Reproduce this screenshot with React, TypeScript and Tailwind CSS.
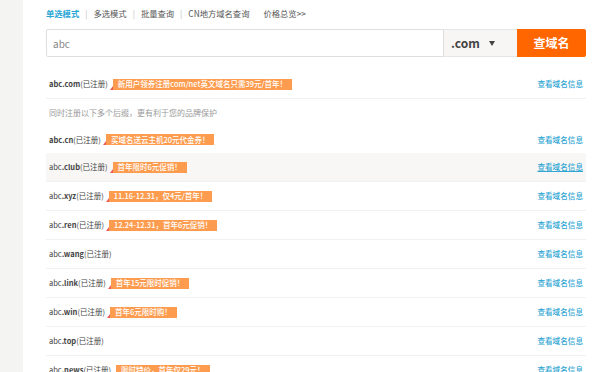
import { ReactNode } from "react";

type Row = { tld: string; badge?: string; bold?: boolean; hover?: boolean };

const rows: Row[] = [
  { tld: ".club", badge: "首年限时6元促销！", hover: true },
  { tld: ".xyz", badge: "11.16-12.31，仅4元/首年！" },
  { tld: ".ren", badge: "12.24-12.31，首年6元促销！" },
  { tld: ".wang" },
  { tld: ".link", badge: "首年15元限时促销！" },
  { tld: ".win", badge: "首年6元限时购！" },
  { tld: ".top" },
  { tld: ".news", badge: "限时特价，首年仅29元！" },
];

function Badge({ children }: { children: ReactNode }) {
  return (
    <span className="relative ml-[5px] inline-flex h-[11px] items-center bg-[#fd9c4f] px-[5px] text-[7.5px] font-medium leading-none text-white">
      <span className="absolute bottom-0 left-[-3px] h-0 w-0 border-b-[4px] border-l-[3px] border-b-[#ee5a55] border-l-transparent" />
      {children}
    </span>
  );
}

function DomainRow({ row, first }: { row: Row; first?: boolean }) {
  return (
    <div
      className={
        "flex items-center justify-between px-[3px] " +
        (first ? "h-[27px] " : "h-[29px] border-b border-[#f1f1f1] ") +
        (row.hover ? "bg-[#f8f7f5]" : "")
      }
    >
      <div className="flex items-center text-[7.5px] text-[#444]">
        <span className={row.bold ? "font-bold" : ""}>abc</span>
        <span className="font-bold">{row.tld}</span>
        <span>(已注册)</span>
        {row.badge && <Badge>{row.badge}</Badge>}
      </div>
      <a className={"text-[7.6px] font-medium text-[#32a6d3] " + (row.hover ? "underline" : "")}>查看域名信息</a>
    </div>
  );
}

export default function App() {
  const font = { fontFamily: '"Noto Sans CJK SC", "Liberation Sans", sans-serif' };
  return (
    <div className="flex h-[372px] w-[600px] overflow-hidden bg-white" style={font}>
      <div className="w-[23px] shrink-0 bg-[#f4f4f2]" />
      <div className="w-[563px] pl-[23px]">
        <div className="flex h-[26px] items-center text-[8.3px] text-[#555]">
          <span className="font-bold text-[#2aa6d6]">单选模式</span>
          <span className="mx-[6px] text-[#bbb]">|</span>
          <span>多选模式</span>
          <span className="mx-[6px] text-[#bbb]">|</span>
          <span>批量查询</span>
          <span className="mx-[6px] text-[#bbb]">|</span>
          <span>CN地方域名查询</span>
          <span className="ml-[14px]">价格总览&gt;&gt;</span>
        </div>
        <div className="mt-[3px] flex h-[28px]">
          <div className="flex flex-1 items-center rounded-l-[2px] border border-[#dedede] pl-[6px] text-[10px] text-[#888]">
            abc
          </div>
          <div className="flex w-[73px] items-center border-y border-[#e6e6e6] bg-[#f7f6f5] pl-[7px] text-[12px] font-bold text-[#444]">
            .com
            <span className="ml-[9px] h-0 w-0 border-x-[3.5px] border-t-[5px] border-x-transparent border-t-[#444]" />
          </div>
          <div className="flex w-[69px] items-center justify-center rounded-r-[2px] bg-[#ff6600] text-[12px] font-bold text-white">
            查域名
          </div>
        </div>
        <div className="mt-[13px]">
          <div className="flex h-[29px] items-center justify-between border-b border-[#f1f1f1] px-[3px]">
            <div className="flex items-center text-[7.5px] text-[#444]">
              <span className="font-bold">abc.com</span>
              <span>(已注册)</span>
              <Badge>新用户领券注册com/net英文域名只需39元/首年！</Badge>
            </div>
            <a className="text-[7.6px] font-medium text-[#32a6d3]">查看域名信息</a>
          </div>
          <div className="flex h-[27px] items-center px-[3px] text-[8px] text-[#999]">
            同时注册以下多个后缀，更有利于您的品牌保护
          </div>
          <DomainRow row={{ tld: ".cn", badge: "买域名送云主机20元代金券！", bold: true }} first />
          {rows.map((r) => (
            <DomainRow key={r.tld} row={r} />
          ))}
        </div>
      </div>
    </div>
  );
}
